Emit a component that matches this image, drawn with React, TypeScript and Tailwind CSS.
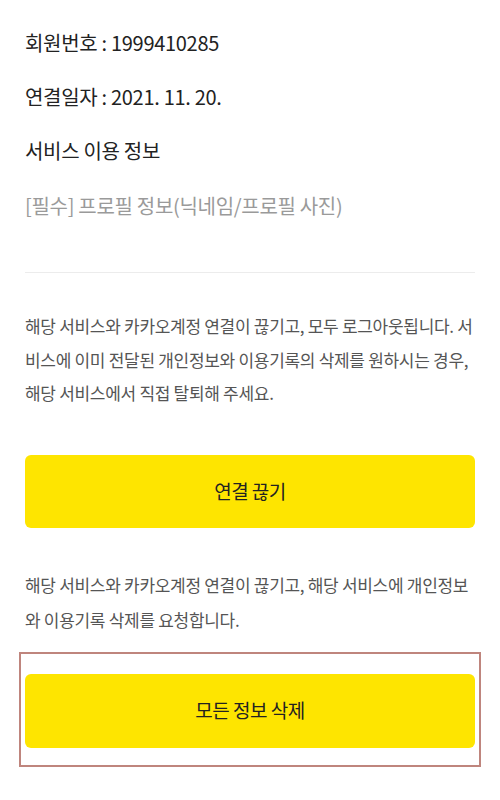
export default function App() {
  return (
    <div
      className="w-[500px] h-[800px] bg-white px-[25px] pt-4 overflow-hidden"
      style={{ fontFamily: '"Noto Sans CJK KR", "Noto Sans", sans-serif' }}
    >
      {/* 계정 정보 */}
      <div className="text-[20px] tracking-[-0.3px] text-[#222]">
        <div className="h-[54px] flex items-center">회원번호 : 1999410285</div>
        <div className="h-[54px] flex items-center">연결일자 : 2021. 11. 20.</div>
        <div className="h-[54px] flex items-center">서비스 이용 정보</div>
        <div className="h-[56px] flex items-center text-[#9a9a9a]">
          [필수] 프로필 정보(닉네임/프로필 사진)
        </div>
      </div>

      <div className="mt-[38px] h-px bg-[#ececec]" />

      {/* 연결 끊기 */}
      <p className="mt-[36px] text-[17px] leading-[33.5px] tracking-[-0.3px] text-[#555]">
        해당 서비스와 카카오계정 연결이 끊기고, 모두 로그아웃됩니다. 서비스에 이미 전달된 개인정보와 이용기록의 삭제를 원하시는 경우, 해당 서비스에서 직접 탈퇴해 주세요.
      </p>
      <button className="mt-[45px] w-full h-[73px] rounded-md bg-[#fee500] text-[19px] tracking-[-0.5px] text-[#222]">
        연결 끊기
      </button>

      {/* 모든 정보 삭제 */}
      <p className="mt-[39px] text-[17px] leading-[35px] tracking-[-0.3px] text-[#555]">
        해당 서비스와 카카오계정 연결이 끊기고, 해당 서비스에 개인정보와 이용기록 삭제를 요청합니다.
      </p>
      <div className="mt-[15px] -mx-[6px] border-2 border-[#bf857d] px-[4px] pt-[20px] pb-[17px]">
        <button className="w-full h-[74px] rounded-md bg-[#fee500] text-[19px] tracking-[-0.5px] text-[#222]">
          모든 정보 삭제
        </button>
      </div>
    </div>
  );
}
